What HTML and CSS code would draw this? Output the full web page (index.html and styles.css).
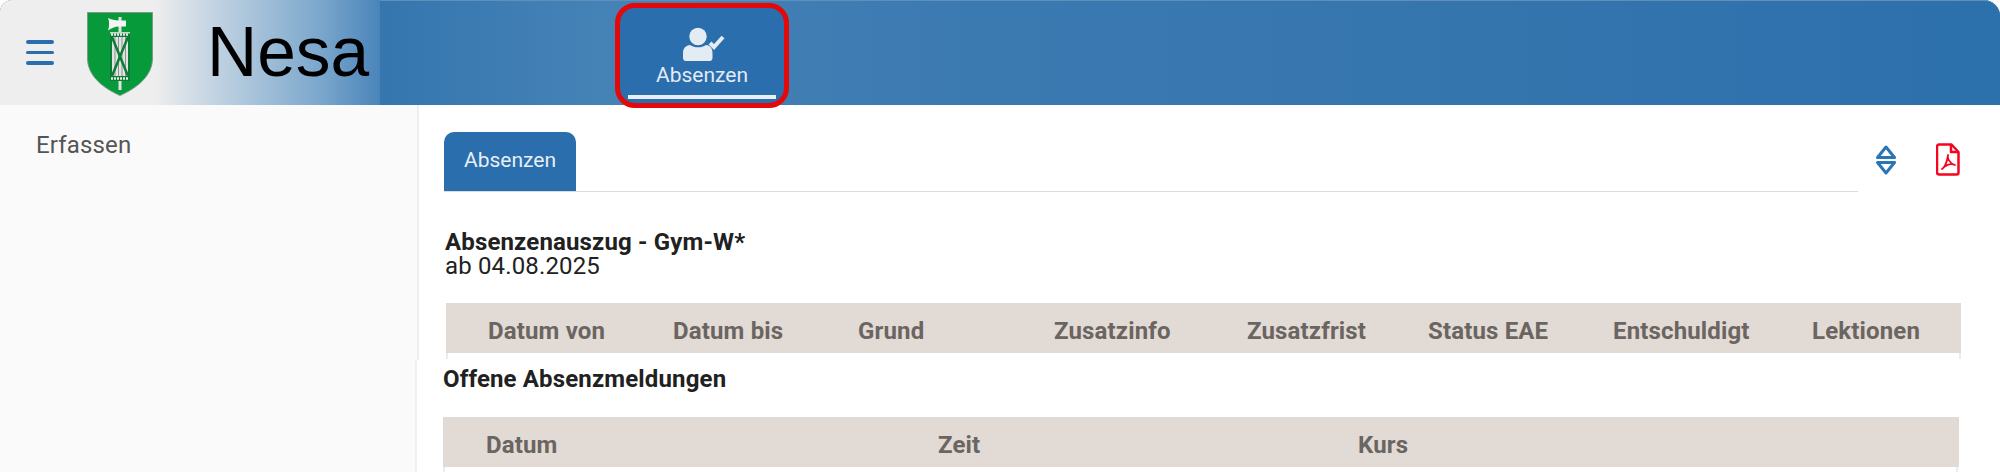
FILE: index.html
```html
<!DOCTYPE html>
<html lang="de">
<head>
<meta charset="utf-8">
<title>Nesa</title>
<link rel="stylesheet" href="styles.css">
</head>
<body>
<header class="topbar">
  <div class="brand">
    <button class="burger" aria-label="Menü"><span></span><span></span><span></span></button>
    <svg class="shield" viewBox="0 0 66 84" aria-hidden="true">
      <path d="M0.5 0.5H65.5V46C65.5 64 50 76 33 83.5C16 76 0.5 64 0.5 46Z" fill="#069a3a" stroke="#7d9a88" stroke-width="1"/>
      <path d="M31.500 5h3v73h-3z" fill="#dfe3df"/>
      <path d="M21 6c3 1.500 7 2.500 11 2.500h7v6h-7c-4 0-8 2-11 4c1.500-4 1.500-9 0-12.500z" fill="#f4f4f4"/>
      <rect x="23" y="20" width="20" height="49" fill="#0b7d34"/>
      <path d="M25 25h16v39h-16z" fill="#e2e2e2"/>
      <path d="M28 25v39M31.500 25v39M35 25v39M38.500 25v39" stroke="#87958b" stroke-width="1"/>
      <path d="M25 25l16 39M41 25l-16 39" stroke="#0b7d34" stroke-width="2.500"/>
      <path d="M23 20h20v1.500h-20z" fill="#c9d8cd"/>
      <path d="M24 22.500h18M24 66.500h18" stroke="#e8e8e8" stroke-width="2.500" stroke-dasharray="2 1"/>
    </svg>
    <span class="wordmark">Nesa</span>
  </div>
  <nav class="mainnav">
    <a class="navitem">
      <svg class="navicon" viewBox="0 0 42 33" aria-hidden="true">
        <circle cx="15" cy="8.500" r="8.700"/>
        <path d="M0 30v-5c0-5 3-7.500 7-8c2.500 1.500 5 2.300 8 2.300s5.500-.8 8-2.300c4 .5 6.500 3 6.500 8v5c0 1.500-1 3-2.500 3H2.500c-1.500 0-2.500-1.500-2.500-3z"/>
        <path d="M27 15l4 4l9-10" fill="none" stroke-width="4" class="tick"/>
      </svg>
      <span class="navlabel">Absenzen</span>
      <span class="navline"></span>
    </a>
  </nav>
</header>

<div class="band band-top">
  <aside class="side"><div class="sidelink">Erfassen</div></aside>
  <main class="content">
    <div class="tabrow">
      <div class="tabs"><div class="tab">Absenzen</div></div>
      <div class="tools">
        <svg class="tool-sort" viewBox="0 0 20 30" aria-hidden="true">
          <path d="M1.500 12.500L10 2l8.500 10.500z"/>
          <path d="M1.500 17.500L10 28l8.500-10.500z"/>
        </svg>
        <svg class="tool-pdf" viewBox="0 0 24 33" aria-hidden="true">
          <path d="M3 1.500h12.500l7 7.500v20.500a2 2 0 0 1-2 2H3a2 2 0 0 1-2-2v-26a2 2 0 0 1 2-2z"/>
          <path d="M15 2v7h7"/>
          <path class="thin" d="M12 12c-1 3 1 8 7 10c-4-2-9 0-13 4c2-1 5-6 6-14z"/>
        </svg>
      </div>
    </div>
    <h2 class="title">Absenzenauszug - Gym-W*</h2>
    <p class="subtitle">ab 04.08.2025</p>
    <div class="thead thead-a">
      <span>Datum von</span><span>Datum bis</span><span>Grund</span><span>Zusatzinfo</span>
      <span>Zusatzfrist</span><span>Status EAE</span><span>Entschuldigt</span><span>Lektionen</span>
    </div>
    <div class="tstub tstub-a"></div>
  </main>
</div>

<div class="band band-bottom">
  <aside class="side side-b"></aside>
  <section class="content content-b">
    <h2 class="title title-b">Offene Absenzmeldungen</h2>
    <div class="thead thead-b">
      <span>Datum</span><span>Zeit</span><span>Kurs</span>
    </div>
    <div class="tstub tstub-b"></div>
  </section>
</div>
</body>
</html>
```

FILE: styles.css
```css
* { box-sizing: border-box; }
html, body { margin: 0; padding: 0; background: #fff; }
body { width: 2000px; height: 472px; overflow: hidden; font-family: Roboto, "Liberation Sans", sans-serif; color: #212121; }

.topbar { display: flex; height: 105px; border-radius: 12px 16px 0 0; background: #2c70ac; overflow: visible; }
.brand { display: flex; align-items: center; width: 380px; height: 105px; border-radius: 12px 0 0 0; background: linear-gradient(90deg, #eeeeee 0, #eeeeee 155px, #c5d5e3 210px, #7ba7cc 320px, #4a84b9 380px); }
.burger { display: flex; flex-direction: column; gap: 7px; width: 28px; margin: 0 0 0 26px; padding: 0; border: 0; background: none; }
.burger span { display: block; height: 3.500px; border-radius: 2px; background: #2a6ead; }
.shield { width: 66px; height: 84px; margin: 2px 0 0 33px; }
.wordmark { margin-left: 54px; font-family: "Liberation Sans", Arial, sans-serif; font-size: 69.500px; line-height: 1; color: #000; }

.mainnav { flex: 1; display: flex; padding-left: 235px; height: 105px; border-top: 1px solid #5f8fbb; border-radius: 0 16px 0 0; background: linear-gradient(90deg, #3576af 0, #4582b6 220px, #3b79b1 600px, #3575ae 1100px, #2c70ac 1620px); }
.navitem { position: relative; z-index: 2; display: flex; flex-direction: column; align-items: center; width: 174px; height: 105px; margin-top: 2px; padding-top: 20px; border: 5px solid #e40808; border-radius: 20px; background: #2a6ead; color: #e3ebf3; }
.navicon { width: 42px; height: 33px; margin-left: 4px; overflow: visible; fill: #e3ebf3; }
.navicon .tick { stroke: #e3ebf3; }
.navlabel { margin-top: 2px; font-size: 21px; line-height: 24px; }
.navline { width: 148px; height: 4px; margin-top: 8px; background: #e8eff5; }

.band { display: flex; }
.band-top { height: 255px; }
.band-bottom { height: 112px; margin-left: 0; }
.side { flex: none; width: 419px; background: #fafafa; border-right: 2px solid #efefef; }
.side-b { width: 417px; }
.sidelink { padding: 27px 0 0 36px; font-size: 24px; line-height: 26px; letter-spacing: 0.150px; color: #555; }
.content { flex: 1; padding: 27px 39px 0 25px; }
.content-b { padding: 0 41px 0 26px; }

.tabrow { display: flex; align-items: flex-start; height: 60px; }
.tabs { flex: none; width: 1414px; height: 60px; border-bottom: 1px solid #dcdcdc; }
.tab { width: 132px; height: 59px; padding-top: 16px; border-radius: 10px 10px 0 0; background: #2a6ead; color: #e8eff5; font-size: 21px; line-height: 24px; text-align: center; }
.tools { display: flex; align-items: flex-start; }
.tool-sort { width: 20px; height: 30px; margin: 13px 0 0 18px; fill: none; stroke: #2a75b5; stroke-width: 3; stroke-linejoin: round; }
.tool-pdf { width: 24px; height: 33px; margin: 11px 0 0 40px; fill: none; stroke: #f5051e; stroke-width: 2.500; stroke-linejoin: round; }
.tool-pdf .thin { stroke-width: 1.800; }

.title { margin: 0 0 0 1px; padding-top: 39px; font-size: 24px; line-height: 22px; font-weight: 700; letter-spacing: 0.150px; color: #212121; }
.title-b { margin-left: 0; padding-top: 8px; height: 57px; }
.subtitle { margin: 1px 0 0 1px; font-size: 24px; line-height: 24px; letter-spacing: 0.150px; color: #212121; }

.thead { display: grid; align-items: center; width: 1515px; height: 50px; padding: 4px 0 0 42px; background: #e2dad5; border-top: 1px solid #dcdcdc; font-size: 24px; font-weight: 700; letter-spacing: 0.150px; color: #6b6561; }
.thead-a { grid-template-columns: 185px 185px 196px 193px 181px 185px 199px 1fr; margin: 25px 0 0 2px; }
.thead-b { grid-template-columns: 452px 420px 1fr; width: 1516px; padding-left: 43px; }
.tstub { width: 1515px; height: 6px; border-left: 2px solid #ececec; border-right: 2px solid #ececec; }
.tstub-a { margin-left: 2px; }
```
